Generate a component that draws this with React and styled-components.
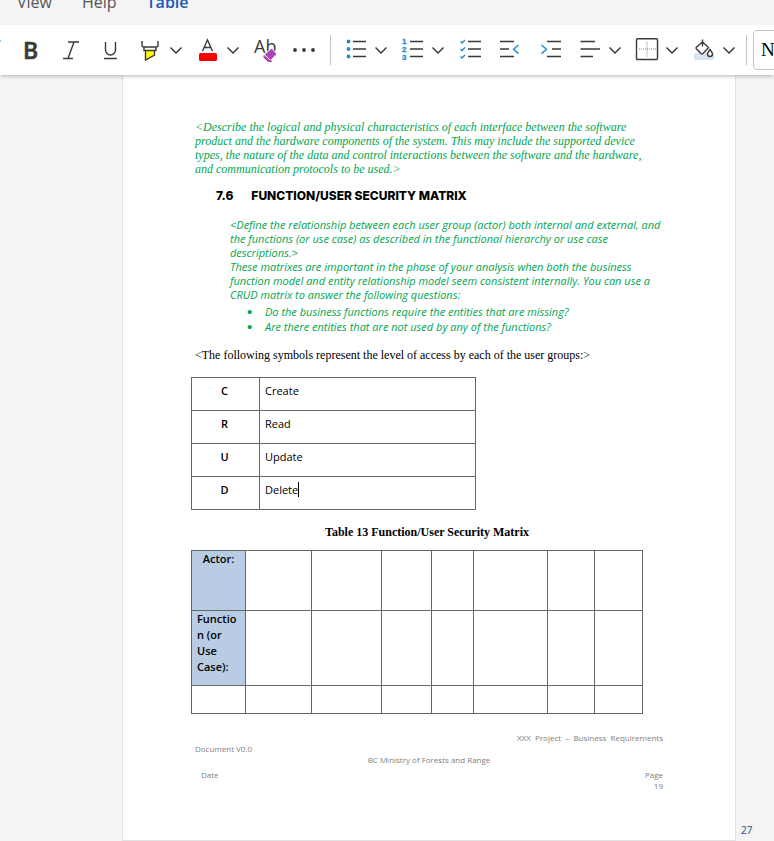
import React from "react";
import styled, { createGlobalStyle } from "styled-components";

const sans = `"Open Sans", "Noto Sans", sans-serif`;
const serif = `"Liberation Serif", serif`;

const GlobalStyle = createGlobalStyle`
  *, *::before, *::after { box-sizing: border-box; }
  body { margin: 0; background: #f4f4f4; }
  button { border: 0; background: none; padding: 0; margin: 0; cursor: pointer; }
`;

const Shell = styled.div`
  min-height: 100vh;
  display: flex;
  flex-direction: column;
  font-family: ${sans};
  color: #000;
`;

const TabStrip = styled.nav`
  height: 25px;
  overflow: hidden;
  display: flex;
  align-items: flex-end;
  gap: 30px;
  padding: 0 17px 11px;
`;

const Tab = styled.button`
  font: ${(p) => (p.$active ? 600 : 400)} 16px/24px ${sans};
  color: ${(p) => (p.$active ? "#185abd" : "#555")};
`;

const Toolbar = styled.div`
  position: relative;
  height: 50px;
  display: flex;
  align-items: center;
  background: #fff;
  box-shadow: 0 3px 3px -1px rgba(0, 0, 0, 0.2);
  overflow: clip;
  overflow-clip-margin: 6px;
`;

const CutEdge = styled.span`
  flex: none;
  width: 11px;
  height: 24px;
`;

const Tool = styled.button`
  flex: none;
  width: ${(p) => (p.$split ? "32px" : "40px")};
  height: 40px;
  display: flex;
  align-items: center;
  justify-content: center;
`;

const Split = styled.div`
  flex: none;
  display: flex;
  padding: 0 4px;
`;

const Arrow = styled.button`
  width: 17px;
  height: 40px;
  display: flex;
  align-items: center;
  justify-content: center;
`;

const Divider = styled.span`
  flex: none;
  width: 1px;
  height: 30px;
  margin: 0 5px;
  background: #c4c4c4;
`;

const StyleBox = styled.button`
  && {
    flex: none;
    width: 120px;
    height: 40px;
    margin-left: 1px;
    padding-left: 7px;
    border: 1px solid #c4c4c4;
    border-radius: 4px;
    text-align: left;
    font: 19px/24px ${serif};
  }
`;

const Canvas = styled.main`
  flex: 1;
  display: grid;
  grid-template-columns: 122px minmax(0, 1fr) 38px;
`;

const Page = styled.article`
  grid-column: 2;
  background: #fff;
  border: 1px solid #e1e1e1;
  border-top: 0;
  padding: 45px 72px 48px;
`;

const PageNumber = styled.span`
  align-self: end;
  padding: 0 0 3px 5px;
  font-size: 10px;
  line-height: 16px;
  color: #2b4a7d;
`;

const Guidance = styled.p`
  margin: 0;
  font: italic 12px/14px ${serif};
  color: #00a650;
`;

const Heading = styled.h2`
  display: flex;
  gap: 18px;
  margin: 12px 0 0 21px;
  font: 800 12px/16px Inter, "Liberation Sans", sans-serif;
`;

const Notes = styled.section`
  margin: 14px 0 0 35px;
  font: italic 11px/14px ${sans};
  color: #00a650;
  white-space: nowrap;
`;

const NoteText = styled.p`
  margin: 0;
`;

const Questions = styled.ul`
  list-style: none;
  margin: 2px 0 0;
  padding: 0 0 0 17px;
  line-height: 15px;
`;

const Question = styled.li`
  display: flex;
  &::before {
    content: "•";
    width: 18px;
    font: 15px/15px "Liberation Sans", sans-serif;
  }
`;

const Lead = styled.p`
  margin: 13px 0 0;
  font: 12px/16px ${serif};
`;

const AccessTable = styled.table`
  width: 61%;
  margin: 14px 0 0 -4px;
  table-layout: fixed;
  border-collapse: collapse;
  font-size: 11px;
  line-height: 16px;
  th, td {
    height: 33px;
    border: 1px solid #666;
    padding: 5px;
    vertical-align: top;
    text-align: left;
  }
  th { padding-right: 7px; text-align: center; font-weight: 600; }
`;

const Caret = styled.span`
  border-right: 1px solid #000;
`;

const MatrixTable = styled.table`
  width: calc(100% - 16px);
  margin: 14px 0 0 -4px;
  table-layout: fixed;
  border-collapse: collapse;
  font-size: 11px;
  line-height: 16px;
  caption {
    margin-left: 20px;
    padding-bottom: 10px;
    font: bold 12px/16px ${serif};
  }
  th, td {
    border: 1px solid #666;
    padding: 0 5px;
    vertical-align: top;
    text-align: left;
    font-weight: 600;
  }
  th { background: #b8cce4; }
`;

const MatrixRow = styled.tr`
  height: ${(p) => p.$height}px;
`;

const ActorCell = styled.th`
  && { text-align: center; }
`;

const Footer = styled.footer`
  margin-top: 18px;
  font-size: 8px;
  line-height: 11px;
  color: #7f7f7f;
`;

const FooterRow = styled.div`
  display: flex;
  justify-content: ${(p) => p.$justify};
  margin-top: ${(p) => p.$gap || 0}px;
  padding-left: ${(p) => p.$indent || 0}px;
  text-align: right;
  white-space: pre;
`;

const Icon = ({ children }) => (
  <svg width="24" height="24" viewBox="0 0 24 24" fill="none" stroke="#3b3a39" strokeWidth="1.4" aria-hidden="true">
    {children}
  </svg>
);

const Chevron = ({ label }) => (
  <Arrow aria-label={label}>
    <svg width="12" height="24" viewBox="0 0 12 24" fill="none" stroke="#3b3a39" strokeWidth="1.5" aria-hidden="true">
      <path d="M.5 9.500 6 15 11.500 9.500" />
    </svg>
  </Arrow>
);

const glyph = { stroke: "none", fill: "#3b3a39", fontFamily: "Open Sans, sans-serif" };

const SplitTool = ({ label, children }) => (
  <Split>
    <Tool $split aria-label={label}>{children}</Tool>
    <Chevron label={`${label} options`} />
  </Split>
);

const columns = [54, 66, 70, 50, 42, 74, 47, 48];
const access = [["C", "Create"], ["R", "Read"], ["U", "Update"], ["D", "Delete"]];
const blanks = (n) => Array.from({ length: n }, (_, i) => <td key={i} />);

export default function App() {
  return (
    <Shell>
      <GlobalStyle />
      <TabStrip aria-label="Ribbon tabs">
        <Tab>View</Tab>
        <Tab>Help</Tab>
        <Tab $active>Table</Tab>
      </TabStrip>

      <Toolbar role="toolbar" aria-label="Formatting">
        <CutEdge>
          <svg width="2" height="24" viewBox="0 0 2 24" aria-hidden="true">
            <path d="M0 3h1" stroke="#1e8bcd" />
          </svg>
        </CutEdge>
        <Tool aria-label="Bold">
          <Icon>
            <text x="4" y="21" fontSize="23" fontWeight="600" {...glyph} stroke="#3b3a39" strokeWidth=".6">B</text>
          </Icon>
        </Tool>
        <Tool aria-label="Italic">
          <Icon><path d="M9 4h11M4 20.500h10M15 4 9 20.500" /></Icon>
        </Tool>
        <Tool aria-label="Underline">
          <Icon><path d="M6.500 4v8a5 5 0 0 0 10 0V4M5 20.500h13" /></Icon>
        </Tool>
        <SplitTool label="Highlight">
          <Icon>
            <path d="M6.500 13h9v4l-9 5z" fill="#ffff00" stroke="none" />
            <path d="M3 3v4q0 2 2 2h12q2 0 2-2V3M5 9v3.500h12V9M6.500 12.500V22l9-5v-4.500" />
          </Icon>
        </SplitTool>
        <SplitTool label="Font color">
          <Icon>
            <path d="M6.500 13 11.500 2l5 11M8.500 9.500h6" />
            <rect x="3" y="15" width="18" height="8" rx="1.500" fill="#ff0000" stroke="none" />
          </Icon>
        </SplitTool>
        <Tool aria-label="Clear formatting">
          <Icon>
            <text x="1" y="15" fontSize="18" {...glyph}>Ab</text>
            <path d="m18 9.500 6 5.500-7 9h-5l-4-4z" fill="#fff" stroke="none" />
            <path d="m18.500 11.500 4 4.500-5.500 5.500-4.500-4.500zM11.500 17.500q-1 1 0 2l3 3q1 1 2.500 1h2" fill="#a846b4" stroke="#a846b4" strokeLinejoin="round" />
            <path d="m12 17 5 5" stroke="#fff" strokeWidth=".8" />
          </Icon>
        </Tool>
        <Tool aria-label="More font options">
          <Icon>
            <g fill="#3b3a39" stroke="none">
              <circle cx="2" cy="12" r="1.900" /><circle cx="11" cy="12" r="1.900" /><circle cx="20" cy="12" r="1.900" />
            </g>
          </Icon>
        </Tool>
        <Divider />
        <SplitTool label="Bullets">
          <Icon>
            <path d="M9 3.500h13M9 11h13M9 18.500h13" />
            <g fill="#1e8bcd" stroke="none">
              <circle cx="4.500" cy="3.500" r="1.900" /><circle cx="4.500" cy="11" r="1.900" /><circle cx="4.500" cy="18.500" r="1.900" />
            </g>
          </Icon>
        </SplitTool>
        <SplitTool label="Numbering">
          <Icon>
            <path d="M9 3.500h13M9 11h13M9 18.500h13" />
            <g fontSize="8" fontWeight="700" fill="#1e8bcd" stroke="#1e8bcd" strokeWidth=".3" fontFamily="Liberation Sans, sans-serif">
              <text x="1" y="6">1</text><text x="1" y="14">2</text><text x="1" y="22">3</text>
            </g>
          </Icon>
        </SplitTool>
        <Tool aria-label="Checklist">
          <Icon>
            <path d="M10 3.500h13M10 11h13M10 18.500h13" />
            <path d="m2.500 3.500 1.500 1.500 3-3M2.500 11l1.500 1.500 3-3M2.500 18.500 4 20l3-3" stroke="#1e8bcd" />
          </Icon>
        </Tool>
        <Tool aria-label="Decrease indent">
          <Icon>
            <path d="M2 3.500h14M2 11h9M2 18.500h14" />
            <path d="m20.500 7-5 4.300 5 4.300" stroke="#1e8bcd" />
          </Icon>
        </Tool>
        <Tool aria-label="Increase indent">
          <Icon>
            <path d="M9 3.500h14M14 11h9M9 18.500h14" />
            <path d="m3.500 7 5 4.300-5 4.300" stroke="#1e8bcd" />
          </Icon>
        </Tool>
        <SplitTool label="Align">
          <Icon><path d="M2.500 3.500H17M2.500 11H22M2.500 18.500H15" /></Icon>
        </SplitTool>
        <SplitTool label="Borders">
          <Icon>
            <rect x="1.500" y="0.700" width="21" height="20.800" rx="1" />
            <path d="M12 3.500v16M4 11h17" strokeDasharray="1 1" stroke="#8a8886" strokeWidth="1" />
          </Icon>
        </SplitTool>
        <SplitTool label="Shading">
          <Icon>
            <path d="M4 14.500h16l2 2V20q0 2-2 2H4q-2 0-2-2v-3.500z" fill="#d9e2f3" stroke="none" />
            <path d="m10.500 4 6 5.500-5.500 6q-1 1-2 0l-4.500-4.500q-1-1 0-2zM10.500 1.500v7" fill="#fff" strokeLinejoin="round" />
            <path d="M18 11.500q-2.500 3.500-2.500 4.500a2.500 2.500 0 0 0 5 0q0-1-2.500-4.500z" fill="#fff" />
          </Icon>
        </SplitTool>
        <Divider />
        <StyleBox>Normal</StyleBox>
      </Toolbar>

      <Canvas>
        <Page>
          <Guidance>
            &lt;Describe the logical and physical characteristics of each interface between the software<br />
            product and the hardware components of the system. This may include the supported device<br />
            types, the nature of the data and control interactions between the software and the hardware,<br />
            and communication protocols to be used.&gt;
          </Guidance>
          <Heading><span>7.6</span><span>FUNCTION/USER SECURITY MATRIX</span></Heading>
          <Notes>
            <NoteText>
              &lt;Define the relationship between each user group (actor) both internal and external, and<br />
              the functions (or use case) as described in the functional hierarchy or use case<br />
              descriptions.&gt;
            </NoteText>
            <NoteText>
              These matrixes are important in the phase of your analysis when both the business<br />
              function model and entity relationship model seem consistent internally. You can use a<br />
              CRUD matrix to answer the following questions:
            </NoteText>
            <Questions>
              <Question>Do the business functions require the entities that are missing?</Question>
              <Question>Are there entities that are not used by any of the functions?</Question>
            </Questions>
          </Notes>
          <Lead>&lt;The following symbols represent the level of access by each of the user groups:&gt;</Lead>

          <AccessTable>
            <colgroup><col width="68" /><col /></colgroup>
            <tbody>
              {access.map(([code, name]) => (
                <tr key={code}>
                  <th scope="row">{code}</th>
                  <td>{code === "D" ? <Caret>{name}</Caret> : name}</td>
                </tr>
              ))}
            </tbody>
          </AccessTable>

          <MatrixTable>
            <caption>Table 13 Function/User Security Matrix</caption>
            <colgroup>{columns.map((w, i) => <col key={i} width={w} />)}</colgroup>
            <tbody>
              <MatrixRow $height={60}><ActorCell scope="row">Actor:</ActorCell>{blanks(7)}</MatrixRow>
              <MatrixRow $height={75}><th scope="row">Functio<br />n (or<br />Use<br />Case):</th>{blanks(7)}</MatrixRow>
              <MatrixRow $height={28}>{blanks(8)}</MatrixRow>
            </tbody>
          </MatrixTable>

          <Footer>
            <FooterRow $justify="flex-end">XXX  Project  –  Business  Requirements</FooterRow>
            <FooterRow $justify="flex-start">Document V0.0</FooterRow>
            <FooterRow $justify="center">BC Ministry of Forests and Range</FooterRow>
            <FooterRow $justify="space-between" $gap={4} $indent={6}>
              <span>Date</span>
              <span>{"Page\n19"}</span>
            </FooterRow>
          </Footer>
        </Page>
        <PageNumber>27</PageNumber>
      </Canvas>
    </Shell>
  );
}
